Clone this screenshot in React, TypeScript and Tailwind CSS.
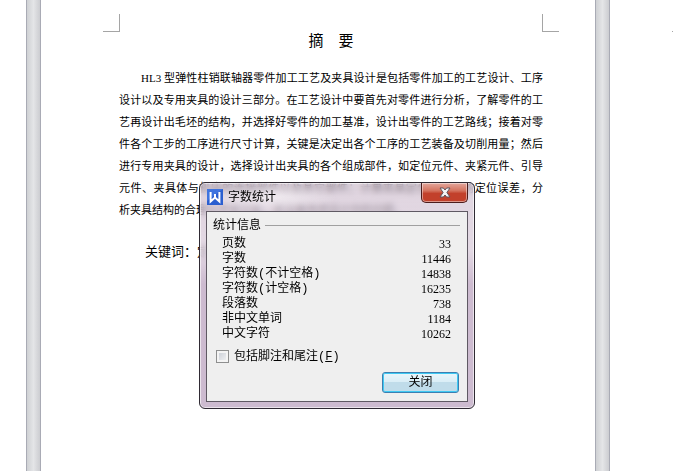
import React from "react";

const stats: [string, string][] = [
  ["页数", "33"],
  ["字数", "11446"],
  ["字符数(不计空格)", "14838"],
  ["字符数(计空格)", "16235"],
  ["段落数", "738"],
  ["非中文单词", "1184"],
  ["中文字符", "10262"],
];

const bodyLines = [
  "设计以及专用夹具的设计三部分。在工艺设计中要首先对零件进行分析，了解零件的工",
  "艺再设计出毛坯的结构，并选择好零件的加工基准，设计出零件的工艺路线；接着对零",
  "件各个工步的工序进行尺寸计算，关键是决定出各个工序的工艺装备及切削用量；然后",
  "进行专用夹具的设计，选择设计出夹具的各个组成部件，如定位元件、夹紧元件、引导",
  "元件、夹具体与机床的连接部件以及其它部件；计算夹具定位时产生的定位误差，分",
];

function Gutter() {
  return (
    <div className="w-[15px] shrink-0 border-x border-[#a9abb5] bg-linear-to-r from-[#cfd1d4] via-[#e4e5e7] to-[#cccdd1]" />
  );
}

function Document() {
  return (
    <main className="min-w-0 flex-1 bg-white pt-[14px] pr-[36px] pl-[62px] text-black">
      <div className="flex justify-between">
        <div className="h-[18px] w-[17px] border-r border-b border-[#a5a5a5]" />
        <div className="h-[18px] w-[17px] border-b border-l border-[#a5a5a5]" />
      </div>
      <article className="mx-[16px] font-['Liberation_Serif','Noto_Sans_CJK_SC',serif]">
        <h1 className="text-center text-[15px] leading-[18px]">摘　要</h1>
        <p className="mt-[17px] text-[11px] leading-[22px] whitespace-nowrap">
          <span className="block pl-[22px] [text-align-last:justify]">
            HL3 型弹性柱销联轴器零件加工工艺及夹具设计是包括零件加工的工艺设计、工序
          </span>
          {bodyLines.map((line) => (
            <span key={line} className="block [text-align-last:justify]">
              {line}
            </span>
          ))}
          <span className="block">析夹具结构的合理与不足之处，并注意改进设计中的问题。</span>
        </p>
        <p className="mt-[20px] pl-[26px] text-[13px] leading-[22px]">关键词：定位</p>
      </article>
    </main>
  );
}

function WordCountDialog() {
  return (
    <section
      role="dialog"
      aria-labelledby="dialog-title"
      className="absolute top-[182px] left-[199px] w-[276px] rounded-[6px] border border-[#2f2a33] bg-linear-to-b from-[#cbb9cb]/60 from-0% via-[#dccfdd]/80 via-30% to-[#cdbbd0] to-45% px-[6px] pb-[6px] font-['Liberation_Mono','Noto_Sans_CJK_SC',monospace] text-[12px] text-black shadow-[inset_0_0_0_1px_rgba(255,255,255,0.6)] backdrop-blur-[3px]"
    >
      <header className="flex h-[28px] items-start">
        <div className="flex h-[28px] flex-1 items-center gap-[5px] bg-radial from-white/50 to-transparent to-70%">
          <svg viewBox="0 0 16 16" className="ml-px size-4" aria-hidden="true">
            <rect width="16" height="16" fill="#2b5fd0" />
            <path d="M0 0H16L0 12Z" fill="#3f74df" />
            <path
              d="M3.6 3V12.5L8 8.6L12.4 12.5V3M8 8.6V5"
              fill="none"
              stroke="#fff"
              strokeWidth="2"
            />
          </svg>
          <h2 id="dialog-title" className="pt-[2px] leading-4">
            字数统计
          </h2>
        </div>
        <div className="flex flex-1 justify-end">
          <button
            type="button"
            aria-label="关闭窗口"
            className="flex h-[20px] w-[47px] items-center justify-center rounded-b-[5px] border border-t-0 border-[#4b1c1c] bg-linear-to-b from-[#e2a79d] from-0% via-[#d4735f] via-40% to-[#c2402b] to-55% shadow-[inset_0_0_0_1px_rgba(255,255,255,0.45)]"
          >
            <svg viewBox="0 0 12 11" className="h-[11px] w-[12px]" aria-hidden="true">
              <path
                d="M1 1H4.4L6 3L7.600 1H11L7.900 5.500L11 10H7.600L6 8L4.400 10H1L4.100 5.500Z"
                fill="#f4f4f4"
                stroke="#5d5560"
                strokeWidth="1"
              />
            </svg>
          </button>
        </div>
      </header>
      <div className="border border-[#5f5963] bg-[#efefef] px-[6px] pt-[4px] pb-[8px]">
        <div className="flex items-center gap-1 pr-px">
          <h3 className="pt-[2px] leading-4">统计信息</h3>
          <div className="h-px flex-1 bg-[#a0a0a0]" />
        </div>
        <table className="mt-[3px] w-full">
          <tbody>
            {stats.map(([label, value]) => (
              <tr key={label} className="h-[15px] leading-[15px]">
                <th scope="row" className="p-0 pl-[9px] text-left font-normal">
                  {label}
                </th>
                <td className="p-0 pr-[10px] text-right font-['Liberation_Serif',serif]">
                  {value}
                </td>
              </tr>
            ))}
          </tbody>
        </table>
        <label className="mt-[5px] ml-[3px] flex items-center gap-[5px] leading-4">
          <input
            type="checkbox"
            className="size-[13px] appearance-none border border-[#8e8f8f] bg-linear-to-br from-[#c5cad3] to-[#f6f6f6] shadow-[inset_0_0_0_2px_#f4f4f4]"
          />
          <span className="pt-[2px]">
            包括脚注和尾注(<u>F</u>)
          </span>
        </label>
        <div className="mt-[7px] flex justify-end pr-[2px]">
          <button
            type="button"
            className="h-[21px] w-[77px] rounded-[3px] border border-[#3c7fb1] bg-linear-to-b from-[#eaf6fb] from-0% via-[#d9edf6] via-49% to-[#c0dcea] to-50% pt-[2px] leading-[17px] shadow-[inset_0_0_0_1px_#3fc9f3]"
          >
            关闭
          </button>
        </div>
      </div>
    </section>
  );
}

export default function App() {
  return (
    <div className="relative flex min-h-screen overflow-hidden bg-white">
      <div className="w-[26px] shrink-0 bg-white" />
      <Gutter />
      <Document />
      <Gutter />
      <div className="flex w-[63px] shrink-0 justify-end bg-white pt-[31px]">
        <div className="h-px w-px bg-[#a5a5a5]" />
      </div>
      <WordCountDialog />
    </div>
  );
}
